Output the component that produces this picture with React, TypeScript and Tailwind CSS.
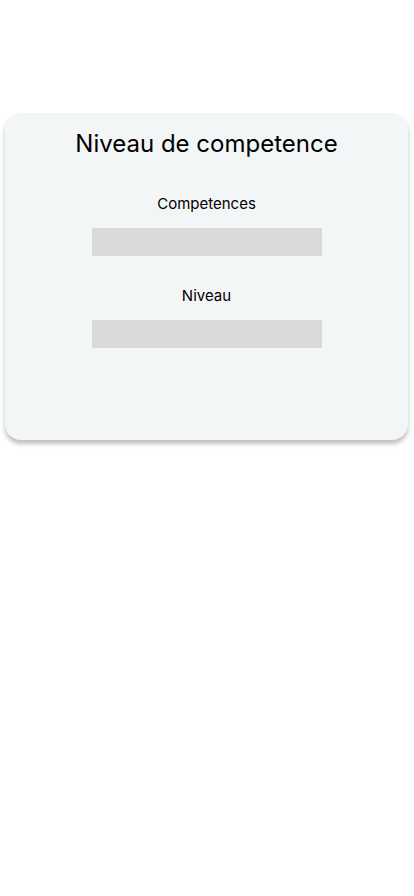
export default function App() {
  return (
    <div
      className="min-h-[896px] w-[414px] bg-white pt-[113px]"
      style={{ fontFamily: "Inter, 'Noto Sans', sans-serif" }}
    >
      <div className="ml-[5px] flex h-[327px] w-[403px] flex-col items-center rounded-[16px] bg-[#f3f6f7] pt-[15px] shadow-[0_4px_4px_rgba(0,0,0,0.25)]">
        <h1 className="text-[24px] leading-[32px] text-black">Niveau de competence</h1>
        <label className="mt-[33px] text-[15px] leading-[22px] text-black">Competences</label>
        <div className="mt-[13px] h-[28px] w-[230px] bg-[#d9d9d9]" />
        <label className="mt-[29px] text-[15px] leading-[22px] text-black">Niveau</label>
        <div className="mt-[13px] h-[28px] w-[230px] bg-[#d9d9d9]" />
      </div>
    </div>
  );
}
